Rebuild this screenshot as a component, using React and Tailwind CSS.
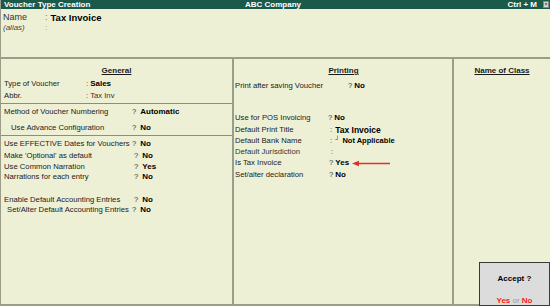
import React from 'react';

const Row = ({ label, w, mark = '?', value, gap = 'ml-[4px]', h = 'h-[11px] leading-[11px]', className = '', children }) => (
    <div className={`flex items-center whitespace-nowrap ${h} ${className}`}>
        <span className={`shrink-0 ${w}`}>{label}</span>
        <span className="text-[#333]">{mark}</span>
        {value && <span className={`${gap} font-bold text-[8px] text-black`}>{value}</span>}
        {children}
    </div>
);

const RedArrow = () => (
    <svg width="38" height="7" viewBox="0 0 38 7" className="ml-[3px]">
        <line x1="4" y1="3.5" x2="38" y2="3.5" stroke="#e0302c" strokeWidth="1.3" />
        <path d="M0 3.5 L7 0.8 L7 6.2 Z" fill="#e0302c" />
    </svg>
);

export default function App() {
    return (
        <div className="relative w-[550px] h-[306px] overflow-hidden bg-[#eef0d6] flex flex-col font-['Liberation_Sans',Arial,sans-serif] text-[#1a1a1a] border-l border-[#9c9d88]">
            {/* title bar */}
            <div className="h-[9px] bg-[#1b5a4a] text-white font-bold text-[8px] leading-[9px] flex items-center pl-[3px] pr-[1px] shrink-0">
                <span className="w-[241px]">Voucher Type Creation</span>
                <span className="flex-1">ABC Company</span>
                <span className="mr-[6px]">Ctrl + M</span>
                <span className="w-[6px] h-[7px] bg-[#d8d8d8] border border-[#888] text-[#444] text-[5px] leading-[5px] flex items-center justify-center">×</span>
            </div>

            {/* header */}
            <div className="h-[48px] shrink-0 pt-[3px] pl-[2px]">
                <div className="flex h-[11px] leading-[11px] items-center">
                    <span className="w-[42px] text-[9px] text-[#333]">Name</span>
                    <span className="text-[#777] text-[9px]">:</span>
                    <span className="ml-[3px] font-bold text-[9.5px] text-black">Tax Invoice</span>
                </div>
                <div className="flex h-[10px] leading-[10px] items-center">
                    <span className="w-[42px] italic text-[8px] text-[#444]">(alias)</span>
                    <span className="text-[#888] text-[8px]">:</span>
                </div>
            </div>

            {/* panels */}
            <div className="flex-1 flex border-t-2 border-b-2 border-[#9c9d88] text-[7.7px]">
                {/* General */}
                <div className="w-[231px] shrink-0 flex flex-col">
                    <div className="h-[44px] pt-[6px] pl-[3px]">
                        <div className="h-[12px] leading-[12px] text-center font-bold text-[8px] underline underline-offset-1 pr-[3px]">General</div>
                        <Row label="Type of Voucher" w="w-[82px]" mark=":" value="Sales" gap="ml-[2px]" h="h-[13px] leading-[13px]" />
                        <div className="flex items-center h-[12px] leading-[12px] whitespace-nowrap">
                            <span className="w-[82px]">Abbr.</span>
                            <span className="text-[#333]">: Tax Inv</span>
                        </div>
                    </div>
                    <div className="h-[32px] border-t border-[#8e8f7a] pt-[2px] pl-[3px]">
                        <Row label="Method of Voucher Numbering" w="w-[128px]" value="Automatic" h="h-[12px] leading-[12px]" />
                        <Row label="Use Advance Configuration" w="w-[121px]" value="No" h="h-[12px] leading-[12px]" className="mt-[4px] pl-[7px]" />
                    </div>
                    <div className="flex-1 border-t border-[#8e8f7a] pt-[2px] pl-[3px]">
                        <Row label="Use EFFECTIVE Dates for Vouchers" w="w-[128px]" value="No" />
                        <Row label="Make 'Optional' as default" w="w-[130px]" value="No" className="mt-[1px]" />
                        <Row label="Use Common Narration" w="w-[130px]" value="Yes" h="h-[10px] leading-[10px]" className="mt-[1px]" />
                        <Row label="Narrations for each entry" w="w-[130px]" value="No" h="h-[10px] leading-[10px]" />
                        <Row label="Enable Default Accounting Entries" w="w-[130px]" value="No" h="h-[10px] leading-[10px]" className="mt-[13px]" />
                        <Row label="Set/Alter Default Accounting Entries" w="w-[125px]" value="No" h="h-[10px] leading-[10px]" className="pl-[3px]" />
                    </div>
                </div>

                <div className="w-[2px] bg-[#9c9d88] shrink-0" />

                {/* Printing */}
                <div className="w-[218px] shrink-0 pt-[6px] pl-[1px]">
                    <div className="h-[12px] leading-[12px] text-center font-bold text-[8px] underline underline-offset-1">Printing</div>
                    <Row label="Print after saving Voucher" w="w-[113px]" value="No" gap="ml-[2px]" className="mt-[3px]" />
                    <Row label="Use for POS Invoicing" w="w-[93px]" value="No" gap="ml-[2px]" h="h-[10px] leading-[10px]" className="mt-[22px]" />
                    <Row label="Default Print Title" w="w-[95px]" mark=":" h="h-[12px] leading-[12px]" className="mt-[1px]">
                        <span className="ml-[3px] font-bold text-[8.5px] text-black">Tax Invoice</span>
                    </Row>
                    <Row label="Default Bank Name" w="w-[95px]" mark=":" h="h-[10px] leading-[10px]">
                        <span className="ml-[3px] text-[6px] font-bold -translate-y-[2px]">┘</span>
                        <span className="ml-[3px] font-bold text-[7.5px] text-black">Not Applicable</span>
                    </Row>
                    <Row label="Default Jurisdiction" w="w-[96px]" mark=":" h="h-[10px] leading-[10px]" className="mt-[1px] text-[#333]" />
                    <Row label="Is Tax Invoice" w="w-[94px]" value="Yes" gap="ml-[2px]" h="h-[10px] leading-[10px]" className="mt-[1px]">
                        <RedArrow />
                    </Row>
                    <Row label="Set/alter declaration" w="w-[94px]" value="No" gap="ml-[2px]" h="h-[10px] leading-[10px]" className="mt-[2px]" />
                </div>

                <div className="w-[2px] bg-[#9c9d88] shrink-0" />

                {/* Name of Class */}
                <div className="flex-1 pt-[6px]">
                    <div className="h-[12px] leading-[12px] text-center font-bold text-[8px] underline underline-offset-1">Name of Class</div>
                </div>
            </div>

            {/* Accept box */}
            <div className="absolute right-0 bottom-0 w-[71px] h-[44px] bg-[#dcdcdc] border border-[#3a3a3a] flex flex-col items-center">
                <div className="mt-[11px] font-bold text-[8px] leading-[10px] text-black">Accept ?</div>
                <div className="mt-[12px] text-[8px] leading-[10px] font-bold">
                    <span className="text-[#ff1a1a]">Yes</span>
                    <span className="text-[#9a9a9a] font-normal"> or </span>
                    <span className="text-[#ff1a1a]">No</span>
                </div>
            </div>
        </div>
    );
}
